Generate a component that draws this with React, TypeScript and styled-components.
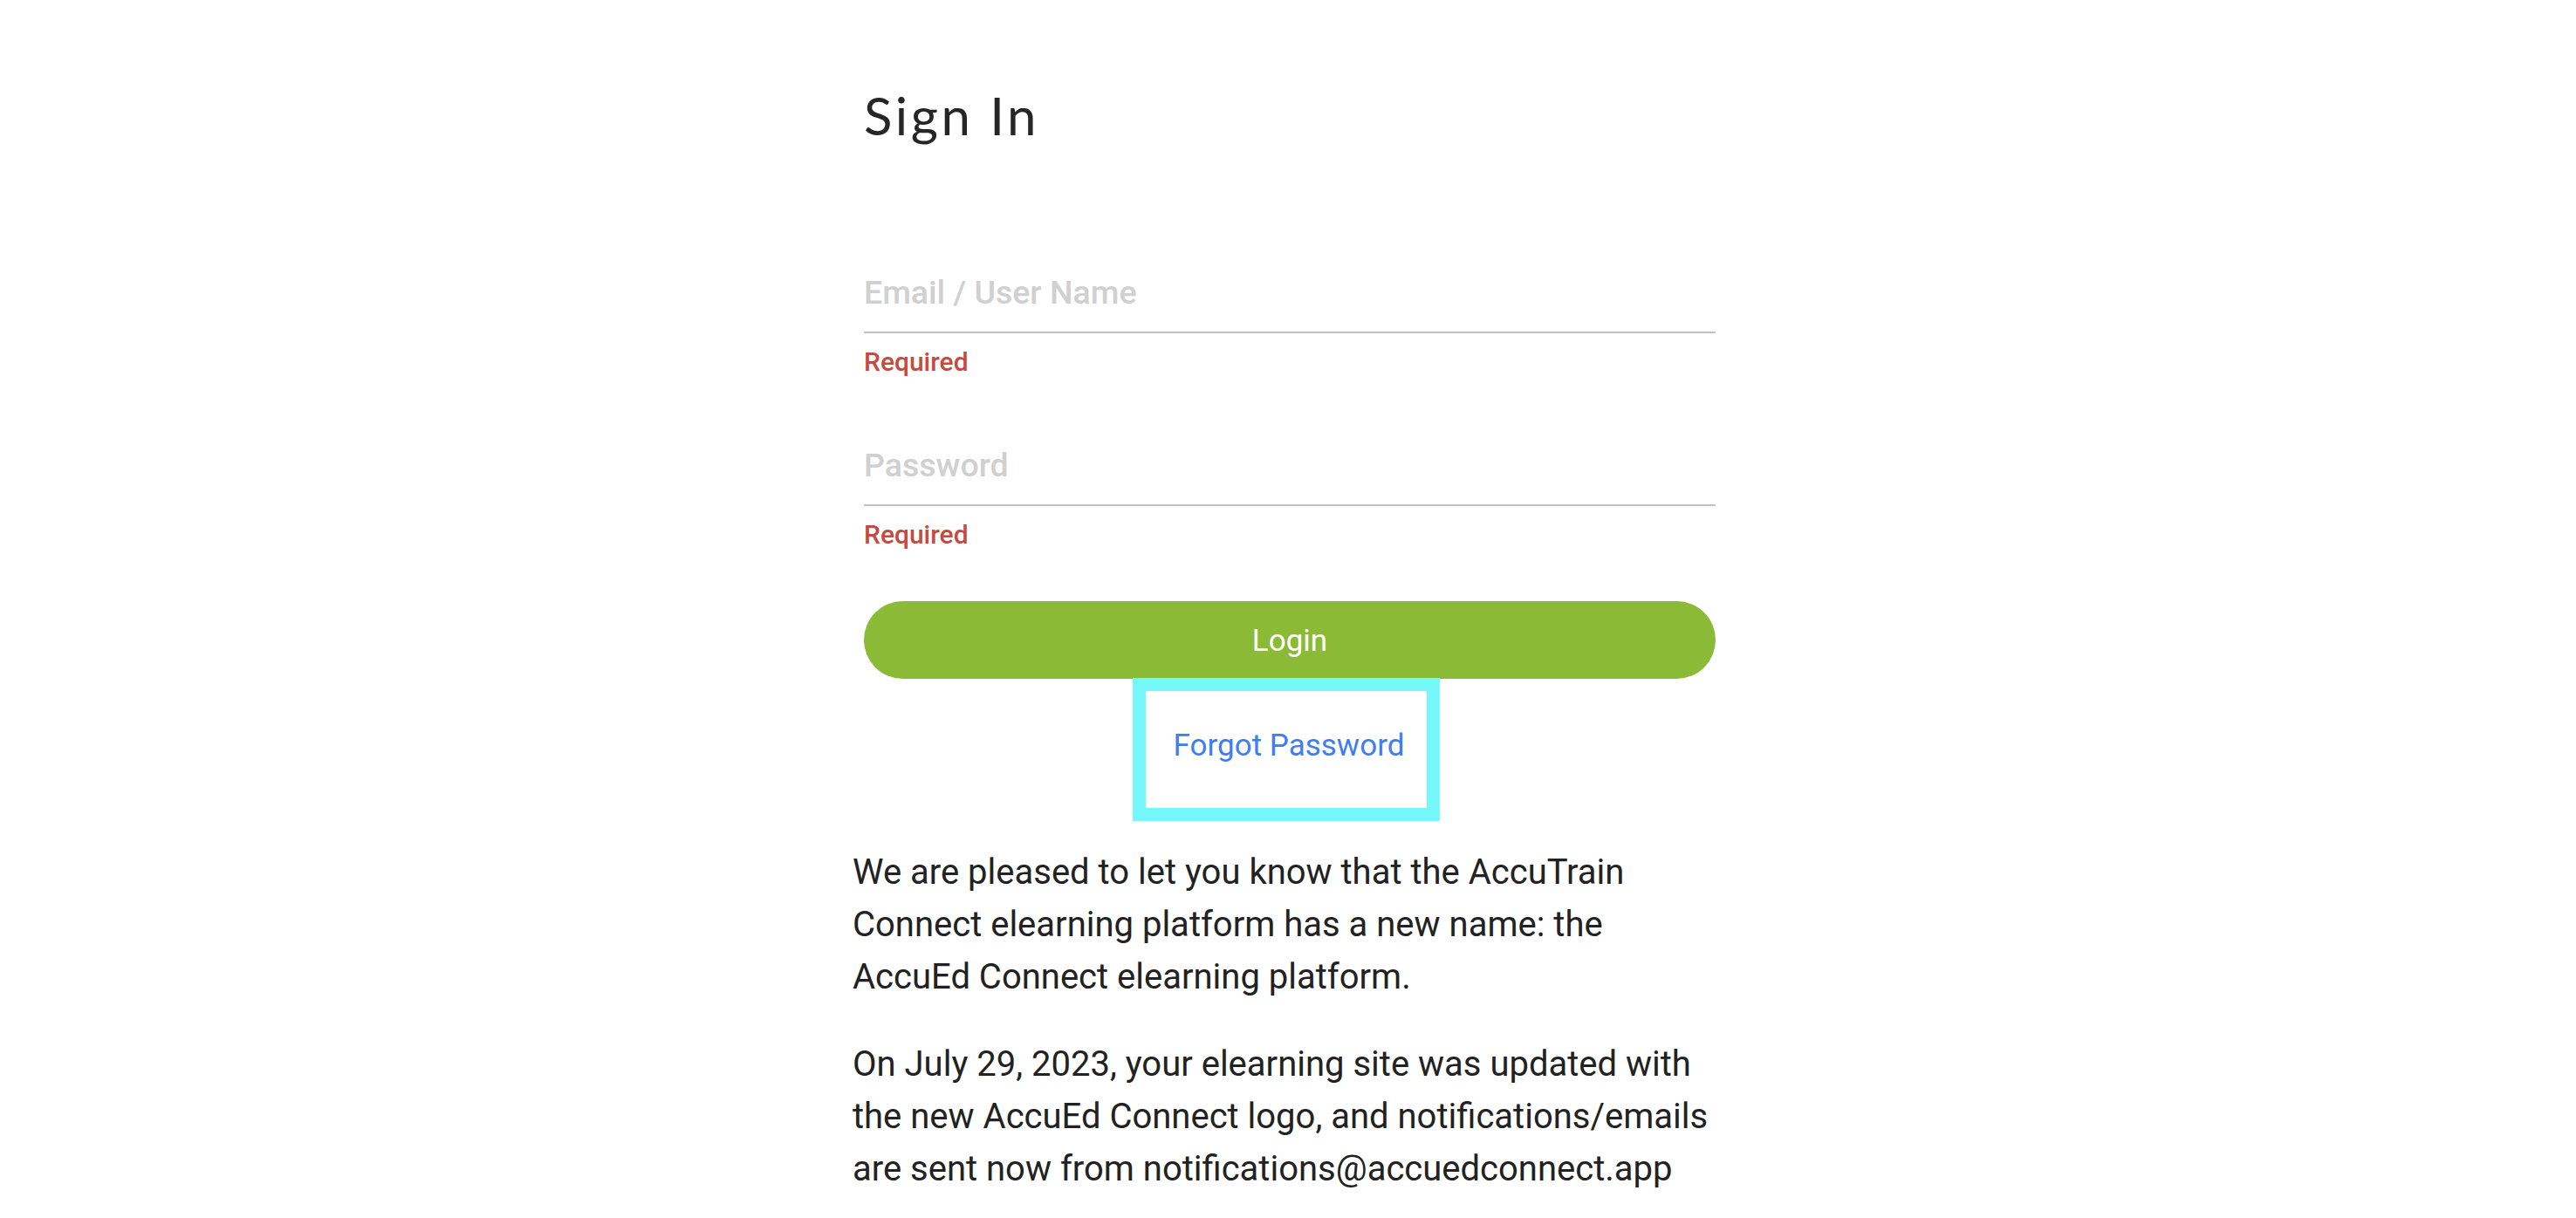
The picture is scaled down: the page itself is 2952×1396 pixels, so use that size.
import React from "react";
import styled, { createGlobalStyle } from "styled-components";

const GlobalStyle = createGlobalStyle`
  html, body {
    margin: 0;
    padding: 0;
    background: #ffffff;
  }
  body {
    font-family: Roboto, "Liberation Sans", sans-serif;
    color: #212121;
  }
`;

const StyledPage = styled.div`
  width: 1000px;
  margin: 0 auto;
  padding-top: 103px;
  display: flex;
  flex-direction: column;
`;

const StyledTitle = styled.h1`
  margin: 0 0 0 14px;
  font-family: Lato, "Open Sans", sans-serif;
  font-size: 60px;
  line-height: 58px;
  font-weight: 400;
  letter-spacing: 3.5px;
  color: #262626;
`;

const StyledForm = styled.form`
  width: 976px;
  margin: 145px 0 0 14px;
  display: flex;
  flex-direction: column;
`;

const StyledField = styled.div<{ spaced?: boolean }>`
  display: flex;
  flex-direction: column;
  margin-top: ${(props) => (props.spaced ? "74px" : "0")};
`;

const StyledInput = styled.input`
  box-sizing: border-box;
  width: 100%;
  height: 76px;
  padding: 0 0 16px 0;
  border: none;
  border-bottom: 2px solid #c2c2c2;
  outline: none;
  background: transparent;
  font-family: Roboto, "Liberation Sans", sans-serif;
  font-size: 37.5px;
  font-weight: 500;
  color: #212121;

  &::placeholder {
    color: #d0d0d0;
    opacity: 1;
  }
`;

const StyledError = styled.div`
  margin-top: 18px;
  font-size: 30px;
  line-height: 30px;
  font-weight: 500;
  color: #c54a40;
`;

const StyledButton = styled.button`
  margin-top: 61px;
  height: 89px;
  width: 100%;
  border: none;
  border-radius: 45px;
  background: #8bba37;
  color: #ffffff;
  font-family: Roboto, "Liberation Sans", sans-serif;
  font-size: 35px;
  line-height: 35px;
  font-weight: 400;
  padding: 2px 0 0;
  cursor: pointer;
`;

const StyledForgotLink = styled.a`
  align-self: center;
  margin: -1px 4px 0 0;
  padding: 38px 26px 46px 32px;
  border: 15px solid #76f8fb;
  background: #ffffff;
  font-size: 35px;
  line-height: 50px;
  color: #3f7df3;
  text-decoration: none;
`;

const StyledNotice = styled.div`
  margin-top: 29px;
  padding-left: 1px;
  width: 986px;
`;

const StyledParagraph = styled.p`
  margin: 0 0 40px 0;
  font-size: 40px;
  line-height: 60px;
  color: #222222;
`;

const App = () => {
  return (
    <>
      <GlobalStyle />
      <StyledPage>
        <StyledTitle>Sign In</StyledTitle>
        <StyledForm onSubmit={(e) => e.preventDefault()}>
          <StyledField>
            <StyledInput type="text" placeholder="Email / User Name" />
            <StyledError>Required</StyledError>
          </StyledField>
          <StyledField spaced>
            <StyledInput type="password" placeholder="Password" />
            <StyledError>Required</StyledError>
          </StyledField>
          <StyledButton type="submit">Login</StyledButton>
        </StyledForm>
        <StyledForgotLink href="#">Forgot Password</StyledForgotLink>
        <StyledNotice>
          <StyledParagraph>
            We are pleased to let you know that the AccuTrain Connect elearning
            platform has a new name: the AccuEd Connect elearning platform.
          </StyledParagraph>
          <StyledParagraph>
            On July 29, 2023, your elearning site was updated with the new
            AccuEd Connect logo, and notifications/emails are sent now from
            notifications@accuedconnect.app
          </StyledParagraph>
        </StyledNotice>
      </StyledPage>
    </>
  );
};

export default App;
